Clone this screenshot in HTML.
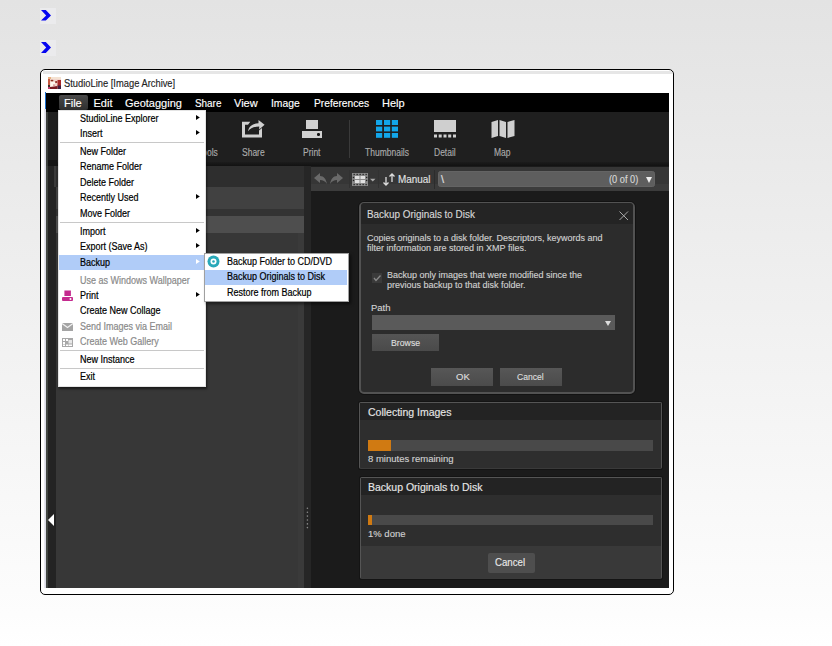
<!DOCTYPE html>
<html><head><meta charset="utf-8">
<style>
*{margin:0;padding:0;box-sizing:border-box}
html,body{width:832px;height:646px;overflow:hidden}
body{position:relative;font-family:"Liberation Sans",sans-serif;background:linear-gradient(#e3e3e3,#fdfdfd 95%,#fff)}
.a{position:absolute}
.t{position:absolute;white-space:nowrap;line-height:1;transform-origin:0 0;-webkit-text-stroke:.15px}
.mb{color:#fff;font-size:11px;top:98px}
.mi{left:80px;font-size:10px;color:#000;transform:scaleX(.9);-webkit-text-stroke:.2px}
.dis{color:#8a8a8a}
.arr{position:absolute;left:196.3px;width:5px;height:6px}
.sep{position:absolute;left:60px;width:144px;height:1px;background:#c8c8c8}
.tl{color:#ababab;font-size:10px;top:147.5px;transform:scaleX(.85)}
.dt{color:#d8d8d8}
</style></head><body>

<!-- chevrons -->
<div class="a" style="left:40px;top:8px;width:16px;height:16px;background:#ebebed"></div>
<div class="a" style="left:40px;top:40px;width:16px;height:16px;background:#ebebed"></div>
<svg class="a" style="left:38px;top:8px" width="16" height="16" viewBox="0 0 16 16"><polygon points="3,2 7.8,2 13,7.4 7.8,12.6 3,12.6 8.2,7.4" fill="#0606f0"/></svg>
<svg class="a" style="left:38px;top:40px" width="16" height="16" viewBox="0 0 16 16"><polygon points="3,2 7.8,2 13,7.5 7.8,13 3,13 8.2,7.5" fill="#0606f0"/></svg>

<!-- frame -->
<div class="a" style="left:40px;top:69px;width:634px;height:526px;border:1px solid #000;border-radius:5px;background:#fff"></div>

<!-- app bg -->
<div class="a" style="left:46px;top:72px;width:623px;height:516px;background:#1b1b1b"></div>
<!-- title bar -->
<div class="a" style="left:46px;top:74px;width:623px;height:19px;background:#fff"></div>
<div class="a" style="left:43px;top:70.5px;width:629px;height:3.5px;background:#e6e6e6"></div>
<svg class="a" style="left:48px;top:77px" width="13" height="12" viewBox="0 0 13 12">
<rect x="0" y="0" width="13" height="12" fill="#f2d6cc"/>
<rect x="0" y="0" width="13" height="2" fill="#f4e2d2"/>
<rect x="0" y="0" width="3" height="2" fill="#e8b080"/>
<rect x="0" y="2" width="2" height="6" fill="#c85a40"/>
<rect x="0" y="8" width="2" height="2" fill="#3a3028"/>
<rect x="0" y="10" width="2" height="2" fill="#c04070"/>
<rect x="2.5" y="5" width="4.5" height="5" fill="#fff8ee"/>
<ellipse cx="4" cy="3.6" rx="1.5" ry="0.8" fill="#8a3020"/>
<ellipse cx="8.2" cy="5" rx="1.2" ry="0.9" fill="#903028"/>
<rect x="9.5" y="3" width="3.5" height="6" fill="#a82828"/>
<rect x="9.5" y="8.5" width="3.5" height="3.5" fill="#402040"/>
<path d="M2,10 L9.5,9 L9.5,12 L2,12z" fill="#7a1820"/>
<rect x="5" y="7.5" width="2" height="1.2" fill="#d08080"/>
</svg>
<div class="t" style="left:64px;top:78px;font-size:10.5px;color:#222;transform:scaleX(.89)">StudioLine [Image Archive]</div>

<div class="a" style="left:44px;top:109px;width:2px;height:479px;background:linear-gradient(90deg,#ececf2,#d6d6e2)"></div>
<!-- menubar -->
<div class="a" style="left:45px;top:92px;width:1px;height:17px;background:#1a70d0"></div>
<div class="a" style="left:46px;top:93px;width:623px;height:19px;background:#000"></div>
<div class="a" style="left:59px;top:95px;width:29px;height:15px;background:linear-gradient(#4a4a4a,#2e2e2e);border-radius:2px"></div>
<div class="t mb" style="left:64px">File</div>
<div class="t mb" style="left:93.5px">Edit</div>
<div class="t mb" style="left:125px">Geotagging</div>
<div class="t mb" style="left:195px;transform:scaleX(.9)">Share</div>
<div class="t mb" style="left:234px">View</div>
<div class="t mb" style="left:271px;transform:scaleX(.94)">Image</div>
<div class="t mb" style="left:314px;transform:scaleX(.93)">Preferences</div>
<div class="t mb" style="left:382px">Help</div>

<!-- toolbar -->
<div class="a" style="left:46px;top:112px;width:623px;height:54px;background:#1f1f1f"></div>
<div class="t tl" style="left:198px">Tools</div>
<div class="t tl" style="left:242px">Share</div>
<div class="t tl" style="left:303px">Print</div>
<div class="t tl" style="left:365px">Thumbnails</div>
<div class="t tl" style="left:434px">Detail</div>
<div class="t tl" style="left:494px">Map</div>
<div class="a" style="left:349px;top:120px;width:1px;height:38px;background:#3a3a3a"></div>
<div class="a" style="left:46px;top:162px;width:623px;height:4px;background:linear-gradient(#1c1c1c,#121212)"></div>
<!-- share icon -->
<svg class="a" style="left:240px;top:118px" width="28" height="22" viewBox="0 0 28 22" fill="#d0d0d0">
<path d="M2,3.8 H10.3 L8,6.8 H5 V16.6 H19 V12.5 L22,10 V19.6 H2z"/>
<path d="M8,13.3 C9,8 13,5.5 18.5,5.2 V2 L24.6,6.8 L19.2,11.6 V8.6 C14,8.6 10.5,10 8,13.3z"/>
</svg>
<!-- print icon -->
<div class="a" style="left:305.5px;top:120px;width:12.6px;height:8.7px;background:#d0d0d0"></div>
<div class="a" style="left:301.6px;top:130.5px;width:20.4px;height:7.6px;background:#d0d0d0"></div>
<div class="a" style="left:317.4px;top:133.2px;width:2.4px;height:2.4px;border-radius:50%;background:#111"></div>
<!-- thumbnails icon -->
<svg class="a" style="left:375.8px;top:120px" width="23" height="18" viewBox="0 0 23 18" fill="#12a6ea">
<rect x="0" y="0" width="6.2" height="5"/><rect x="8" y="0" width="6.2" height="5"/><rect x="15.8" y="0" width="6.2" height="5"/>
<rect x="0" y="6.6" width="6.2" height="4.8"/><rect x="8" y="6.6" width="6.2" height="4.8"/><rect x="15.8" y="6.6" width="6.2" height="4.8"/>
<rect x="0" y="13" width="6.2" height="4.8"/><rect x="8" y="13" width="6.2" height="4.8"/><rect x="15.8" y="13" width="6.2" height="4.8"/>
</svg>
<!-- detail icon -->
<svg class="a" style="left:434px;top:120px" width="22" height="18" viewBox="0 0 22 18" fill="#cfcfcf">
<rect x="0" y="0" width="22" height="12"/>
<rect x="0" y="14.5" width="3" height="3"/><rect x="4.7" y="14.5" width="3" height="3"/><rect x="9.5" y="14.5" width="3" height="3"/><rect x="14.2" y="14.5" width="3" height="3"/><rect x="19" y="14.5" width="3" height="3"/>
</svg>
<!-- map icon -->
<svg class="a" style="left:491px;top:120px" width="24" height="18" viewBox="0 0 24 18" fill="#cfcfcf">
<path d="M0.5,2 L7,0 V16 L0.5,18z"/><path d="M8.5,0 L15,2 V18 L8.5,16z"/><path d="M16.5,2 L23.5,0 V16 L16.5,18z"/>
</svg>

<!-- left strip -->
<div class="a" style="left:46px;top:112px;width:2px;height:54px;background:#3b3e3b"></div>
<div class="a" style="left:48px;top:160px;width:9px;height:6px;background:#141414"></div>
<div class="a" style="left:46px;top:166px;width:2.5px;height:422px;background:#424642"></div>
<div class="a" style="left:48px;top:166px;width:8px;height:422px;background:#232323"></div>
<div class="a" style="left:54px;top:166px;width:3px;height:21px;background:#3a3a3a"></div>
<div class="t" style="left:48px;top:514px;width:0;height:0;border-right:6px solid #fff;border-top:6px solid transparent;border-bottom:6px solid transparent"></div>

<!-- left panel -->
<div class="a" style="left:56px;top:166px;width:248px;height:422px;background:#373737"></div>
<div class="a" style="left:56px;top:166px;width:248px;height:21px;background:#2e2e2e"></div>
<div class="a" style="left:56px;top:187px;width:248px;height:22px;background:#414141"></div>
<div class="a" style="left:56px;top:209px;width:248px;height:7px;background:#333"></div>
<div class="a" style="left:56px;top:216px;width:248px;height:17px;background:#4e4e4e"></div>
<div class="a" style="left:298px;top:233px;width:6px;height:355px;background:#3a3a3a"></div>
<!-- splitter -->
<div class="a" style="left:304px;top:166px;width:7px;height:422px;background:#262626"></div>
<svg class="a" style="left:305px;top:506px" width="5" height="24" fill="#8a8a8a"><circle cx="2.4" cy="2.2" r=".8"/><circle cx="2.4" cy="6.2" r=".8"/><circle cx="2.4" cy="10.1" r=".8"/><circle cx="2.4" cy="14" r=".8"/><circle cx="2.4" cy="17.9" r=".8"/><circle cx="2.4" cy="21.6" r=".8"/></svg>

<!-- right toolbar row -->
<div class="a" style="left:311px;top:167px;width:358px;height:24px;background:linear-gradient(#363636 70%,#3c3c3c 72%)"></div>
<svg class="a" style="left:313px;top:172px" width="32" height="14" viewBox="0 0 32 14" fill="#6a6a6a">
<path d="M1,6 L7,1 V4 C11,4 13,7 14,12 C12,9 10,8 7,8 V11z"/>
<path d="M30,6 L24,1 V4 C20,4 18,7 17,12 C19,9 21,8 24,8 V11z"/>
</svg>
<div class="a" style="left:349px;top:170px;width:1px;height:18px;background:#323232"></div>
<svg class="a" style="left:352px;top:173px" width="24" height="13" viewBox="0 0 24 13">
<rect x="0" y="0" width="16" height="13" fill="#8a8a8a"/>
<g fill="#222"><rect x="1.5" y="0.8" width="1.3" height="1.3"/><rect x="1.5" y="10.9" width="1.3" height="1.3"/><rect x="4.5" y="0.8" width="1.3" height="1.3"/><rect x="4.5" y="10.9" width="1.3" height="1.3"/><rect x="7.5" y="0.8" width="1.3" height="1.3"/><rect x="7.5" y="10.9" width="1.3" height="1.3"/><rect x="10.5" y="0.8" width="1.3" height="1.3"/><rect x="10.5" y="10.9" width="1.3" height="1.3"/><rect x="13.5" y="0.8" width="1.3" height="1.3"/><rect x="13.5" y="10.9" width="1.3" height="1.3"/><rect x="0.8" y="3.8" width="1.3" height="1.3"/><rect x="14" y="3.8" width="1.3" height="1.3"/><rect x="0.8" y="6.8" width="1.3" height="1.3"/><rect x="14" y="6.8" width="1.3" height="1.3"/></g>
<g fill="#e0e0e0"><rect x="3" y="3" width="4.5" height="3"/><rect x="8.5" y="3" width="4.5" height="3"/><rect x="3" y="7" width="4.5" height="3"/><rect x="8.5" y="7" width="4.5" height="3"/></g>
<path d="M18,5.8 h5.5 l-2.75,2.8z" fill="#aaa"/>
</svg>
<div class="a" style="left:378px;top:170px;width:1px;height:18px;background:#323232"></div>
<svg class="a" style="left:382px;top:173px" width="14" height="13" viewBox="0 0 14 13" fill="none" stroke="#ddd" stroke-width="1.3">
<path d="M4,4 V12 M1.5,9.5 L4,12 L6.5,9.5"/><path d="M10,1 V9 M7.5,3.5 L10,1 L12.5,3.5"/>
</svg>
<div class="t" style="left:398px;top:174px;font-size:11px;color:#e0e0e0;transform:scaleX(.9)">Manual</div>
<div class="a" style="left:434px;top:170px;width:1px;height:19px;background:#2c2c2c"></div>
<div class="a" style="left:438px;top:171.2px;width:217px;height:16.2px;background:#5e5e5e;border:1px solid #646464;border-radius:2.5px"></div>
<div class="t" style="left:441px;top:174px;font-size:11px;color:#e0e0e0">\</div>
<div class="t" style="left:609px;top:174px;font-size:10.5px;color:#d8d8d8;transform:scaleX(.88)">(0 of 0)</div>
<div class="a" style="left:646px;top:177px;width:0;height:0;border-top:6px solid #eee;border-left:3.5px solid transparent;border-right:3.5px solid transparent"></div>

<!-- dialog -->
<div class="a" style="left:358px;top:200.5px;width:278px;height:194.5px;border:1px solid #121212;border-radius:6px"></div>
<div class="a" style="left:359.2px;top:201.6px;width:275.8px;height:192.4px;border:2px solid #525252;border-radius:5px;background:#2c2c2c"></div>
<div class="a" style="left:361px;top:203.3px;width:272px;height:20.7px;background:#242424;border-radius:3px 3px 0 0"></div>
<div class="t dt" style="left:367px;top:208.5px;font-size:11px;transform:scaleX(.9)">Backup Originals to Disk</div>
<svg class="a" style="left:618.5px;top:210.5px" width="10" height="10" stroke="#a8a8a8" stroke-width="1"><path d="M0.5,0.5 L9,9 M9,0.5 L0.5,9"/></svg>
<div class="t dt" style="left:367px;top:234px;font-size:9px;color:#cfcfcf">Copies originals to a disk folder. Descriptors, keywords and</div>
<div class="t dt" style="left:367px;top:243.8px;font-size:9px;color:#cfcfcf">filter information are stored in XMP files.</div>
<div class="a" style="left:372px;top:273px;width:10px;height:10px;background:#3a3a3a"></div>
<svg class="a" style="left:372px;top:273px" width="10" height="10" fill="none" stroke="#888" stroke-width="1.3"><path d="M2,5 L4,7.5 L8.5,2.5"/></svg>
<div class="t" style="left:387px;top:271px;font-size:9px;color:#cfcfcf">Backup only images that were modified since the</div>
<div class="t" style="left:387px;top:281px;font-size:9px;color:#cfcfcf">previous backup to that disk folder.</div>
<div class="t" style="left:371px;top:303px;font-size:9.5px;color:#d0d0d0">Path</div>
<div class="a" style="left:372px;top:315px;width:243px;height:15px;background:#5a5a5a"></div>
<div class="a" style="left:605px;top:321px;width:0;height:0;border-top:5px solid #ddd;border-left:3px solid transparent;border-right:3px solid transparent"></div>
<div class="a" style="left:372px;top:334px;width:67px;height:17px;background:linear-gradient(#555,#4a4a4a)"></div>
<div class="t" style="left:391px;top:338px;font-size:9.5px;color:#ddd;transform:scaleX(.92)">Browse</div>
<div class="a" style="left:431px;top:368px;width:62px;height:18px;background:linear-gradient(#575757,#4b4b4b)"></div>
<div class="t" style="left:456px;top:372px;font-size:9.5px;color:#ddd">OK</div>
<div class="a" style="left:500px;top:368px;width:62px;height:18px;background:linear-gradient(#575757,#4b4b4b)"></div>
<div class="t" style="left:517px;top:372px;font-size:9.5px;color:#ddd;transform:scaleX(.9)">Cancel</div>

<!-- progress panel 1 -->
<div class="a" style="left:358px;top:401px;width:305px;height:69px;border:1px solid #141414;border-radius:2px"></div>
<div class="a" style="left:359px;top:402px;width:303px;height:67px;border:1px solid #555;border-bottom-color:#3a3a3a;background:#2e2e2e;border-radius:2px"></div>
<div class="a" style="left:360px;top:403px;width:301px;height:17px;background:#232323"></div>
<div class="t" style="left:368px;top:407px;font-size:10.5px;color:#e6e6e6;transform:scaleX(1)">Collecting Images</div>
<div class="a" style="left:368px;top:440px;width:285px;height:11px;background:#494949"></div>
<div class="a" style="left:368px;top:440px;width:23px;height:11px;background:#d07a12"></div>
<div class="t" style="left:368px;top:454px;font-size:9.5px;color:#cfcfcf">8 minutes remaining</div>

<!-- progress panel 2 -->
<div class="a" style="left:359px;top:476px;width:304px;height:104px;border:1px solid #141414;border-radius:2px"></div>
<div class="a" style="left:360px;top:477px;width:302px;height:102px;border:1px solid #555;border-bottom-color:#3a3a3a;background:#2e2e2e;border-radius:2px"></div>
<div class="a" style="left:361px;top:478px;width:300px;height:17px;background:#232323"></div>
<div class="t" style="left:368px;top:482px;font-size:10.5px;color:#e6e6e6">Backup Originals to Disk</div>
<div class="a" style="left:368px;top:515px;width:285px;height:10px;background:#494949"></div>
<div class="a" style="left:368px;top:515px;width:4px;height:10px;background:#d07a12"></div>
<div class="t" style="left:368px;top:529px;font-size:9.5px;color:#cfcfcf">1% done</div>
<div class="a" style="left:361px;top:546px;width:300px;height:32px;background:#393939"></div>
<div class="a" style="left:488px;top:553px;width:47px;height:20px;background:#4e4e4e;border-radius:2px"></div>
<div class="t" style="left:495px;top:557px;font-size:11px;color:#e8e8e8;transform:scaleX(.88)">Cancel</div>

<!-- file menu -->
<div class="a" style="left:58px;top:110px;width:148px;height:277px;background:#fff;border:1px solid #e4e4e4;box-shadow:1px 2px 2px rgba(0,0,0,.55)"></div>
<div class="a" style="left:59px;top:255px;width:145px;height:15.4px;background:#b0ccf8"></div>
<div class="t mi" style="top:114px">StudioLine Explorer</div>
<div class="t mi" style="top:129px">Insert</div>
<div class="sep" style="top:142px"></div>
<div class="t mi" style="top:147px">New Folder</div>
<div class="t mi" style="top:162px">Rename Folder</div>
<div class="t mi" style="top:178px">Delete Folder</div>
<div class="t mi" style="top:193px">Recently Used</div>
<div class="t mi" style="top:209px">Move Folder</div>
<div class="sep" style="top:222px"></div>
<div class="t mi" style="top:227px">Import</div>
<div class="t mi" style="top:242px">Export (Save As)</div>
<div class="t mi" style="top:258px">Backup</div>
<div class="t mi dis" style="top:276px">Use as Windows Wallpaper</div>
<div class="t mi" style="top:291px">Print</div>
<div class="t mi" style="top:306px">Create New Collage</div>
<div class="t mi dis" style="top:322px">Send Images via Email</div>
<div class="t mi dis" style="top:337px">Create Web Gallery</div>
<div class="sep" style="top:350px"></div>
<div class="t mi" style="top:355px">New Instance</div>
<div class="sep" style="top:368px"></div>
<div class="t mi" style="top:372px">Exit</div>
<svg class="arr" style="top:114.9px" viewBox="0 0 5 6"><polygon points="0,0 3.8,2.55 0,5.1" fill="#000"/></svg>
<svg class="arr" style="top:129.9px" viewBox="0 0 5 6"><polygon points="0,0 3.8,2.55 0,5.1" fill="#000"/></svg>
<svg class="arr" style="top:193.9px" viewBox="0 0 5 6"><polygon points="0,0 3.8,2.55 0,5.1" fill="#000"/></svg>
<svg class="arr" style="top:227.9px" viewBox="0 0 5 6"><polygon points="0,0 3.8,2.55 0,5.1" fill="#000"/></svg>
<svg class="arr" style="top:242.9px" viewBox="0 0 5 6"><polygon points="0,0 3.8,2.55 0,5.1" fill="#000"/></svg>
<svg class="arr" style="top:258.9px" viewBox="0 0 5 6"><polygon points="0,0 3.8,2.55 0,5.1" fill="#fff"/></svg>
<svg class="arr" style="top:291.9px" viewBox="0 0 5 6"><polygon points="0,0 3.8,2.55 0,5.1" fill="#000"/></svg>
<!-- menu icons -->
<svg class="a" style="left:62px;top:290px" width="11" height="11" viewBox="0 0 11 11"><rect x="2.4" y="0.5" width="6.5" height="5.5" fill="#c42a8e"/><rect x="0" y="6.9" width="11" height="4" rx="1" fill="#c42a8e"/><circle cx="8.5" cy="8.9" r="1" fill="#fff"/></svg>
<svg class="a" style="left:62px;top:322.6px" width="11" height="8.5" viewBox="0 0 11 8.5"><rect x="0" y="0" width="11" height="8.5" fill="#a4a4a4"/><path d="M0,0.5 L5.5,4.5 L11,0.5" fill="none" stroke="#f2f2f2" stroke-width="1.2"/></svg>
<svg class="a" style="left:62px;top:337.5px" width="11" height="9" viewBox="0 0 11 9"><rect x="0" y="0" width="11" height="9" fill="#a8a8a8"/><g fill="#fff"><rect x="1" y="1" width="2" height="2"/><rect x="4" y="1" width="2" height="2"/><rect x="1" y="4" width="2" height="2"/><rect x="1" y="6.5" width="2" height="1.5"/><rect x="4" y="6.5" width="2" height="1.5"/><rect x="6.5" y="6.5" width="3.5" height="1.5"/></g><rect x="6.5" y="2" width="3.5" height="3.5" fill="#e8e8e8"/></svg>

<!-- submenu -->
<div class="a" style="left:204px;top:253px;width:145px;height:49px;background:#fff;border:1px solid #a0a0a0;box-shadow:2px 2px 3px rgba(0,0,0,.5)"></div>
<div class="a" style="left:205px;top:270px;width:142px;height:14.7px;background:#b0ccf8"></div>
<svg class="a" style="left:207px;top:255px" width="13" height="13"><circle cx="6.5" cy="6.5" r="6" fill="#28a8b8"/><circle cx="6.5" cy="6.5" r="3" fill="#fff"/><circle cx="6.5" cy="6.5" r="1.3" fill="#28a8b8"/></svg>
<div class="t mi" style="left:227px;top:257px">Backup Folder to CD/DVD</div>
<div class="t mi" style="left:227px;top:272px">Backup Originals to Disk</div>
<div class="t mi" style="left:227px;top:288px">Restore from Backup</div>

</body></html>
